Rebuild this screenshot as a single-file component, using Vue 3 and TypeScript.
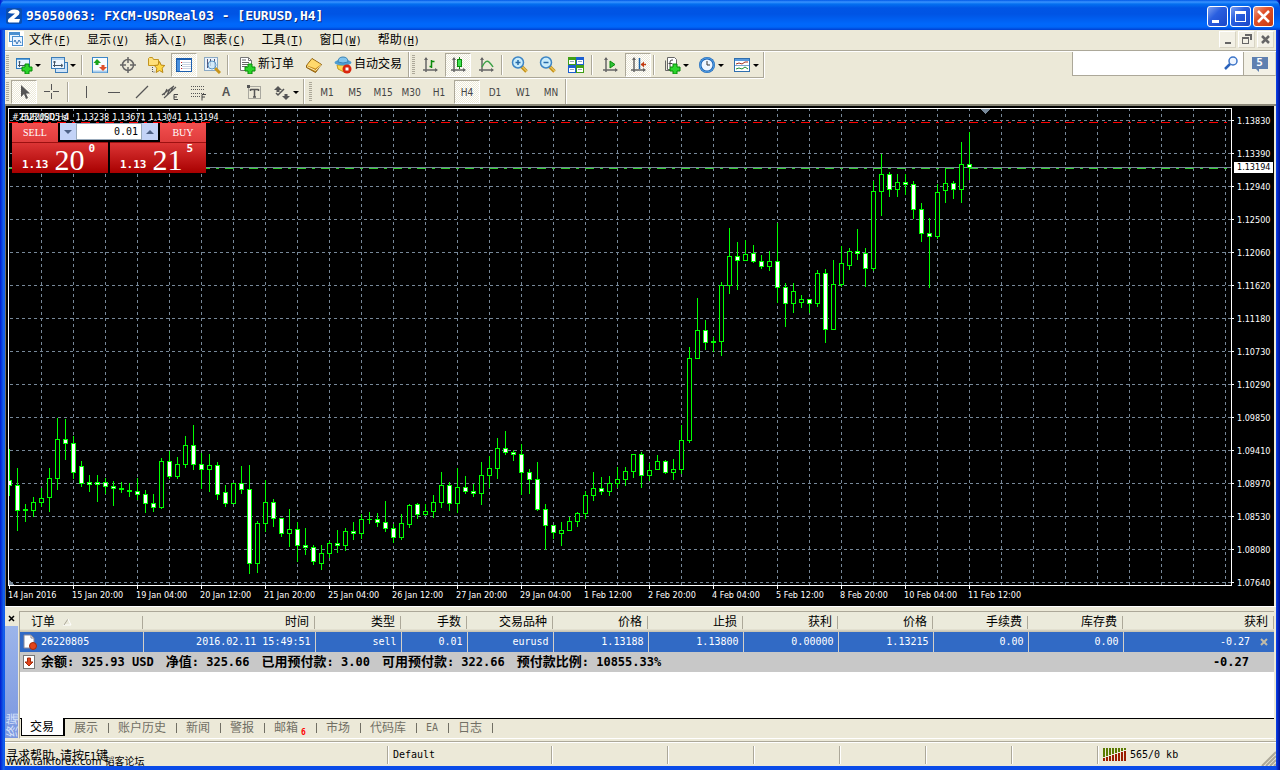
<script setup lang="ts">
import { h, ref } from 'vue'

/* Splits a label into Chinese and Latin runs, each with its own face and size. */
const Mix = (props: { text: string }) =>
  (props.text.match(/[\u4e00-\u9fff]+|[^\u4e00-\u9fff]+/g) ?? []).map((run) =>
    h('span', { class: /[\u4e00-\u9fff]/.test(run) ? 'run-han' : 'run-latin' }, run),
  )
Mix.props = ['text']

const menus = [
  ['文件', 'F'], ['显示', 'V'], ['插入', 'I'], ['图表', 'C'],
  ['工具', 'T'], ['窗口', 'W'], ['帮助', 'H'],
]

const axes = '<path d="M5 2v14M2 14h14" stroke="#666" stroke-width="1.5" fill="none"/><path d="M3 4l2-3 2 3zM14 12l3 2-3 2z" fill="#666"/>'
const plus = '<path d="M10 8h4v3h3v4h-3v3h-4v-3H7v-4h3z" fill="#2bd52b" stroke="#078a07"/>'
const lens = '<path d="M10.500 10.500l5 5" stroke="#c8951c" stroke-width="3.500"/><path d="M11 10.500l5 5" stroke="#ffe184" stroke-width="1"/><circle cx="7" cy="6.500" r="5.500" fill="#c9ecfb" stroke="#3d85c4" stroke-width="1.500"/>'
const sheet = '<path d="M2.500 1.500h8l3 3v10h-11z" fill="#fff" stroke="#777"/><path d="M10.500 1.500v3h3" fill="none" stroke="#777"/>'

const icons: Record<string, string> = {
  newChart: '<rect x="1.500" y="2.500" width="13" height="10" fill="#e8f4ff" stroke="#2f7bbd"/><path d="M2 3.500h12" stroke="#5fa5dd"/><path d="M4.500 5v6M3 9.500h7M3.500 6h2" stroke="#456" fill="none"/>' + plus,
  profiles: '<rect x="5.500" y="6.500" width="12" height="10" fill="#cfe4f8" stroke="#3b7cb8"/><rect x="1.500" y="1.500" width="13" height="11" fill="#eef7ff" stroke="#3b7cb8"/><path d="M2 3h12" stroke="#79b2e2"/><path d="M4.500 5v6M3 9.500h9M11 8l2 1.500-2 1.500M3 6h3" stroke="#456" fill="none"/>',
  market: '<rect x="1.500" y="1.500" width="15" height="15" fill="#fafdff" stroke="#3c87c7"/><path d="M2 15.500h14" stroke="#a9cdec" stroke-width="2"/><path d="M6 3l4 4H7.500v2h-3V7H2.500z" fill="#1ca41c"/><path d="M12 15l-4-4h2.500V9h3v2H16z" fill="#e0512a"/>',
  target: '<circle cx="9" cy="9" r="5.500" fill="none" stroke="#666" stroke-width="1.500"/><path d="M9 1v6M9 11v6M1 9h6M11 9h6" stroke="#666" stroke-width="1.500"/>',
  favourites: '<path d="M1.500 2.500v7h10v-6h-5l-1-2h-3z" fill="#ffe07a" stroke="#c29520"/><path d="M5.500 11v5h3" stroke="#555" stroke-dasharray="1 1" fill="none"/><path d="M12.500 5.500l1.600 3.600 3.700.4-2.700 2.700.8 4.300-3.400-2-3.400 2 .8-4.300-2.700-2.700 3.700-.4z" fill="#ffd845" stroke="#b98712"/>',
  terminal: '<rect x="1.500" y="2.500" width="15" height="13" fill="#fff" stroke="#1d5fae"/><path d="M2 3h3v12H2z" fill="#4a90dd"/><path d="M2 3.500h14" stroke="#1d5fae"/><path d="M7 6.500h9M7 8.500h9M7 10.500h9M7 12.500h9" stroke="#c7d4e2"/><path d="M6 6.500h1M6 12.500h1" stroke="#d22"/><path d="M6 9.500h1" stroke="#111"/>',
  tester: '<rect x="1.500" y="1.500" width="13" height="13" fill="#eaf3fb" stroke="#8aa9c5"/><path d="M4.500 3v9M7.500 3v7M11.500 3v9" stroke="#557" fill="none"/><path d="M12 12l5 5" stroke="#c8951c" stroke-width="3"/><circle cx="9" cy="9" r="4" fill="#cde7f9" fill-opacity=".8" stroke="#5b95c5"/>',
  order: sheet + '<path d="M4 6.500h7M4 8.500h7M4 10.500h5" stroke="#666"/><path d="M4 4h4" stroke="#666"/>' + plus,
  gold: '<path d="M1.500 9.500L7 2.500l9.500 6-6 8-9-5z" fill="#c78a1c" stroke="#8b5d0b"/><path d="M2 9.500L7 3l9 5.500-5.500 4z" fill="#ffd96c"/><path d="M2 10.500l8.500 4 5.500-5" fill="none" stroke="#fff0b8"/>',
  expert: '<path d="M3 9h12l-1 4-4 3-6-3z" fill="#ffd84f" stroke="#c29a20"/><ellipse cx="9" cy="6.500" rx="8.500" ry="3" fill="#4f9ed2"/><path d="M4 6q0-5 5-5t5 5q-5 2-10 0z" fill="#82c4ec" stroke="#3b83b5"/><circle cx="13" cy="13" r="4.500" fill="#d9260f"/><rect x="11.500" y="11.500" width="3" height="3" fill="#fff"/>',
  bars: axes + '<path d="M10.500 4v8M8.500 10.500h2M10.500 5.500h3" stroke="#0b8a0b" stroke-width="1.500" fill="none"/>',
  candles: axes + '<path d="M10.500 1v12" stroke="#0b8a0b"/><rect x="8.500" y="3.500" width="4" height="7" fill="#3fe04f" stroke="#0b8a0b"/>',
  line: axes + '<path d="M5 11q4-8 7-5t4 5" stroke="#3aa046" stroke-width="1.500" fill="none"/>',
  zoomIn: lens + '<path d="M4.500 6.500h5M7 4v5" stroke="#276ba9" stroke-width="1.500"/>',
  zoomOut: lens + '<path d="M4.500 6.500h5" stroke="#276ba9" stroke-width="1.500"/>',
  tile: '<path d="M1 1h8v8H1zM9 9h8v8H9z" fill="#3f9f16"/><path d="M9 1h8v8H9zM1 9h8v8H1z" fill="#1c5fd0"/><path d="M2 4h6v4H2zM10 4h6v4h-6zM2 12h6v4H2zM10 12h6v4h-6z" fill="#fff"/><path d="M3 5.500h4M11 5.500h4M3 13.500h4M11 13.500h4" stroke="#9ab"/>',
  scroll: axes + '<path d="M9 5l5 3.500-5 3.500z" fill="#2dc437" stroke="#0b8a0b"/>',
  shift: axes + '<path d="M10.500 2v11" stroke="#1b62a5" stroke-width="1.500"/><path d="M12 8.500h5" stroke="#c33b10" stroke-width="1.500"/><path d="M12 8.500l3-3v6z" fill="#c33b10"/>',
  indicators: '<path d="M4.500 1.500h7l2 2v10h-9z" fill="#fff" stroke="#666"/><path d="M2.500 4.500v10h5" fill="none" stroke="#666"/><path d="M10 4H9q-2 0-2 2v5M5.500 7.500h4" stroke="#444" fill="none"/>' + plus,
  clock: '<circle cx="9" cy="9" r="8" fill="#1c62b4"/><circle cx="9" cy="9" r="7" fill="none" stroke="#58a9ec"/><circle cx="9" cy="9" r="5.500" fill="#eef6ff"/><path d="M9 5v4h3" stroke="#333" fill="none"/>',
  template: '<rect x="1.500" y="2.500" width="15" height="13" fill="#fff" stroke="#2f6fae"/><path d="M2 4h14" stroke="#5a9bdd" stroke-width="2"/><path d="M2 9.500h14" stroke="#7aa6cf"/><path d="M3 8l3-1 3 1 3-2h3" stroke="#a03020" fill="none"/><path d="M3 13l3-1 3 1 3-2 3 2" stroke="#1a8d30" fill="none"/>',
  cursor: '<path d="M6 2v12l3-3 2 5 2-1-2-4.500h4z" fill="#555"/>',
  cross: '<path d="M8.500 1v6M8.500 10v6M1 8.500h6M10 8.500h6" stroke="#555"/>',
  vline: '<path d="M9.500 3v12" stroke="#555"/>',
  hline: '<path d="M3 9.500h12" stroke="#555"/>',
  trend: '<path d="M3 15L15 3" stroke="#555" stroke-width="1.300"/>',
  channel: '<path d="M1 12L13 3M3 15L15 4M3 12l3-6M6 12l3-6M9 10l3-6" stroke="#555" stroke-width="1.200"/><path d="M17 11.500h-4v5h4M13 14h3" stroke="#444" fill="none"/>',
  fibo: '<path d="M2 3.500h14M2 6.500h14M2 10.500h14M2 13.500h9" stroke="#555" stroke-dasharray="1 1"/><path d="M17 11.500h-4v6M13 14h3" stroke="#444" fill="none"/>',
  label: '<rect x="3.500" y="3.500" width="12" height="12" fill="none" stroke="#666" stroke-dasharray="1 1"/><path d="M2 2h3v3H2z" fill="#555"/><path d="M5.500 6.500h8M9.500 6v8M5.500 6v2M13.500 6v2M8 14h3" stroke="#555" stroke-width="1.500"/>',
  arrows: '<path d="M5 3l4 4H6.500v2h-3V7H1zM13 17l-4-4h2.500v-2h3v2H17z" fill="#555"/><path d="M3 10l2 2 6-6" stroke="#555" stroke-width="1.500" fill="none"/>',
}

interface Tool {
  kind: 'button' | 'sep'
  icon?: string
  title?: string
  text?: string
  pressed?: boolean
  drop?: boolean
}
const b = (icon: string, title: string, extra: Partial<Tool> = {}): Tool => ({ kind: 'button', icon, title, ...extra })
const sep: Tool = { kind: 'sep' }

const mainTools: Tool[] = [
  b('newChart', '新图表', { drop: true }), b('profiles', '配置文件', { drop: true }), sep,
  b('market', '市场报价'), b('target', '数据窗口'), b('favourites', '导航'),
  b('terminal', '终端', { pressed: true }), b('tester', '策略测试'), sep,
  b('order', '新订单', { text: '新订单' }), b('gold', 'MetaEditor'), b('expert', '自动交易', { text: '自动交易' }),
]
const chartTools: Tool[] = [
  b('bars', '柱状图'), b('candles', '阴阳烛', { pressed: true }), b('line', '折线图'), sep,
  b('zoomIn', '放大'), b('zoomOut', '缩小'), b('tile', '平铺窗口'), sep,
  b('scroll', '自动滚动'), b('shift', '图表平移', { pressed: true }), sep,
  b('indicators', '技术指标', { drop: true }), b('clock', '时间周期', { drop: true }), b('template', '模板', { drop: true }),
]
const lineTools: Tool[] = [
  b('cursor', '光标', { pressed: true }), b('cross', '十字准线'), sep,
  b('vline', '垂直线'), b('hline', '水平线'), b('trend', '趋势线'), b('channel', '等距通道'),
  b('fibo', '斐波纳契'), b('', '文字'), b('label', '文本标签'), b('arrows', '箭头', { drop: true }),
]
const toolbarTop = [mainTools, chartTools]
const periods = ['M1', 'M5', 'M15', 'M30', 'H1', 'H4', 'D1', 'W1', 'MN']
const period = ref('H4')
const lots = ref('0.01')
const query = ref('')

const priceLabels = [
  '1.13830', '1.13390', '1.12940', '1.12500', '1.12060', '1.11620', '1.11180', '1.10730',
  '1.10290', '1.09850', '1.09410', '1.08970', '1.08530', '1.08080', '1.07640',
]
const timeLabels = [
  '14 Jan 2016', '15 Jan 20:00', '19 Jan 04:00', '20 Jan 12:00', '21 Jan 20:00', '25 Jan 04:00',
  '26 Jan 12:00', '27 Jan 20:00', '29 Jan 04:00', '1 Feb 12:00', '2 Feb 20:00', '4 Feb 04:00',
  '5 Feb 12:00', '8 Feb 20:00', '10 Feb 04:00', '11 Feb 12:00',
]

/* wick top, body top, body bottom, wick bottom, 1 when the candle closed lower */
const candles: number[][] = [
  [341,372,378,388,1],[360,377,403,423,1],[396,401,403,414,0],[389,394,403,409,0],[380,390,395,399,0],
  [360,370,390,404,0],[310,331,371,382,0],[311,331,336,352,1],[328,335,365,371,1],[353,358,376,379,1],
  [367,374,377,384,1],[367,374,377,394,1],[370,374,379,386,1],[373,378,381,398,1],[374,380,382,385,0],
  [375,382,384,389,0],[370,383,387,392,1],[382,386,396,405,1],[386,395,400,404,1],[350,353,400,401,0],
  [343,353,369,371,1],[349,356,369,371,0],[328,337,357,360,0],[317,337,357,362,1],[345,356,362,381,1],
  [346,357,362,384,0],[354,357,387,392,1],[377,384,396,399,1],[375,375,396,396,0],[358,375,382,386,1],
  [357,381,456,466,1],[413,415,456,465,0],[372,394,416,424,0],[391,394,411,419,1],[410,410,426,429,1],
  [401,421,426,439,0],[414,421,438,454,1],[420,437,440,447,1],[437,439,454,457,1],[437,445,456,462,0],
  [433,435,446,450,0],[422,435,438,445,1],[420,423,438,443,0],[414,423,426,432,1],[406,411,426,431,0],
  [404,411,412,416,0],[405,411,415,419,1],[393,414,421,424,1],[416,420,430,435,1],[406,415,430,432,0],
  [396,397,417,420,0],[395,396,407,411,1],[396,403,407,408,0],[387,394,404,410,0],[364,377,395,400,0],
  [374,377,396,403,1],[360,379,396,405,0],[368,379,384,386,1],[376,383,386,389,1],[354,367,386,397,0],
  [348,360,368,380,0],[330,340,361,371,0],[323,340,345,347,1],[342,344,347,353,1],[336,346,365,387,1],
  [361,364,372,386,1],[354,371,402,403,1],[396,401,418,442,1],[417,417,425,431,1],[414,422,426,438,0],
  [409,413,423,423,0],[404,405,414,419,0],[383,387,406,411,0],[364,380,388,393,0],[369,380,384,387,1],
  [368,375,384,388,0],[359,371,376,380,0],[359,363,372,378,0],[346,346,364,370,0],[344,346,368,380,1],
  [355,362,368,373,0],[347,353,362,362,0],[352,353,365,366,1],[351,361,365,372,0],[317,332,362,366,0],
  [239,250,333,335,0],[190,222,251,251,0],[212,222,235,242,1],[229,233,235,244,0],[174,177,234,248,0],
  [120,148,178,186,0],[134,148,153,182,1],[132,146,153,153,0],[137,145,154,155,1],[147,153,159,161,1],
  [143,153,159,163,0],[115,153,180,195,1],[175,179,196,219,1],[175,183,196,205,0],[187,191,195,200,0],
  [191,191,196,205,1],[162,165,196,199,0],[161,165,222,235,1],[152,176,222,222,0],[138,155,177,179,0],
  [140,143,158,162,0],[121,143,146,152,1],[140,145,161,179,1],[73,83,161,163,0],[46,66,84,108,0],
  [64,66,82,89,1],[66,74,82,89,0],[66,74,77,87,1],[73,76,102,111,1],[95,101,126,134,1],
  [110,125,129,180,1],[76,84,129,131,0],[60,75,83,95,0],[73,75,82,91,1],[34,56,82,95,0],[24,56,60,72,1],
]

const columns = [
  { name: '时间', cell: '2016.02.11 15:49:51' }, { name: '类型', cell: 'sell' }, { name: '手数', cell: '0.01' },
  { name: '交易品种', cell: 'eurusd' }, { name: '价格', cell: '1.13188' }, { name: '止损', cell: '1.13800' },
  { name: '获利', cell: '0.00000' }, { name: '价格', cell: '1.13215' }, { name: '手续费', cell: '0.00' },
  { name: '库存费', cell: '0.00' },
]
const summary = ['余额: 325.93 USD', '净值: 325.66', '已用预付款: 3.00', '可用预付款: 322.66', '预付款比例: 10855.33%']
const tabs = ['展示', '账户历史', '新闻', '警报', '邮箱', '市场', '代码库', 'EA', '日志']
</script>

<template>
  <div class="window">
    <header class="title-bar">
      <svg class="logo" width="16" height="16" viewBox="0 0 16 16" aria-hidden="true">
        <rect width="16" height="16" rx="2" fill="#0a4eb0" />
        <path d="M2 5Q4 1 9 1.500q6 .5 4 5L8 11h6l-1 3.500H3q-2-1-.5-3.500L9 5.500H5.500z" fill="#fff" />
      </svg>
      <h1>95050063: FXCM-USDReal03 - [EURUSD,H4]</h1>
      <div class="caption">
        <button class="cap" aria-label="最小化"><svg width="19" height="19"><path d="M4 13h7v3H4z" fill="#fff" /></svg></button>
        <button class="cap" aria-label="最大化"><svg width="19" height="19"><path d="M4 4h11v11H4zM5 7v7h9V7z" fill="#fff" fill-rule="evenodd" /></svg></button>
        <button class="cap close" aria-label="关闭"><svg width="19" height="19"><path d="M4 4l11 11M15 4L4 15" stroke="#fff" stroke-width="2.500" /></svg></button>
      </div>
    </header>

    <div class="client">
      <nav class="menu-bar">
        <svg width="16" height="16" viewBox="0 0 16 16" aria-hidden="true">
          <rect width="16" height="16" fill="#fff" />
          <rect x="1.500" y="1.500" width="10" height="9" fill="#eaf4ff" stroke="#4a8fd0" />
          <path d="M2 3h9" stroke="#4a8fd0" stroke-width="2" />
          <rect x="4.500" y="5.500" width="10" height="9" fill="#eaf4ff" stroke="#4a8fd0" />
          <path d="M6 11l1-2 2 4 2-4 2 3" fill="none" stroke="#3976b5" />
        </svg>
        <button v-for="[name, key] in menus" :key="key" class="menu">
          <span class="run-han">{{ name }}</span><span class="run-latin">(<u>{{ key }}</u>)</span>
        </button>
        <div class="mdi">
          <button aria-label="最小化图表"><svg width="14" height="14"><path d="M4 10h6v2H4z" fill="#666" /></svg></button>
          <button aria-label="还原图表"><svg width="14" height="14"><path d="M5 2h7v6h-2V4H5zM2 5h7v7H2zM3 7v4h5V7z" fill="#666" fill-rule="evenodd" /></svg></button>
          <button aria-label="关闭图表"><svg width="14" height="14"><path d="M3 4l7 7M10 4l-7 7" stroke="#666" stroke-width="2.500" /></svg></button>
        </div>
      </nav>

      <div class="tools-row">
        <div v-for="(group, g) in toolbarTop" :key="g" class="toolbar">
          <i class="grip"></i>
          <template v-for="(t, n) in group" :key="n">
            <i v-if="t.kind === 'sep'" class="sep"></i>
            <button v-else :class="['tool', { pressed: t.pressed, drop: t.drop, wide: t.text }]" :title="t.title" :aria-label="t.title">
              <svg width="18" height="18" viewBox="0 0 18 18" v-html="icons[t.icon!]"></svg>
              <span v-if="t.text" class="run-han caption-text">{{ t.text }}</span>
              <i v-if="t.drop" class="caret"></i>
            </button>
          </template>
        </div>
        <div class="search">
          <input v-model="query" type="text" aria-label="搜索" />
          <svg width="15" height="15" viewBox="0 0 15 15" aria-hidden="true">
            <circle cx="9" cy="5" r="4" fill="#eef5ff" stroke="#3c74c8" stroke-width="1.500" />
            <path d="M6 8l-5 5" stroke="#2a62bb" stroke-width="2.500" />
          </svg>
        </div>
        <button class="chat" aria-label="消息 5">
          <svg width="18" height="18" viewBox="0 0 18 18"><path d="M1 2h16v12H8v3l-3-3H1z" fill="#5f80b0" /></svg>
          <b>5</b>
        </button>
      </div>

      <div class="tools-row second">
        <div class="toolbar">
          <i class="grip"></i>
          <template v-for="(t, n) in lineTools" :key="n">
            <i v-if="t.kind === 'sep'" class="sep"></i>
            <button v-else :class="['tool', { pressed: t.pressed, drop: t.drop }]" :title="t.title" :aria-label="t.title">
              <svg v-if="t.icon" width="18" height="18" viewBox="0 0 18 18" v-html="icons[t.icon]"></svg>
              <span v-else class="letter">A</span>
              <i v-if="t.drop" class="caret"></i>
            </button>
          </template>
        </div>
        <div class="toolbar">
          <i class="grip"></i>
          <button v-for="p in periods" :key="p" :class="['tool', 'period', { pressed: p === period }]" @click="period = p">{{ p }}</button>
        </div>
      </div>

      <main class="chart">
        <div class="plot-row">
          <div class="plot">
            <svg width="100%" height="476" shape-rendering="crispEdges" role="img" aria-label="EURUSD H4">
              <defs>
                <pattern id="dots-h" x="1" width="6" height="1" patternUnits="userSpaceOnUse"><rect width="3" height="1" fill="#778899" /></pattern>
                <pattern id="dots-v" y="0" width="1" height="6" patternUnits="userSpaceOnUse"><rect width="1" height="3" fill="#778899" /></pattern>
                <pattern id="stop" width="24" height="1" patternUnits="userSpaceOnUse"><rect width="9" height="1" fill="#ff0000" /><rect x="15" width="3" height="1" fill="#ff0000" /></pattern>
                <pattern id="open" width="24" height="1" patternUnits="userSpaceOnUse"><rect width="9" height="1" fill="#32cd32" /><rect x="15" width="3" height="1" fill="#32cd32" /></pattern>
              </defs>
              <g transform="translate(0 -1)">
                <rect v-for="k in 60" :key="'v' + k" :x="32 * k" y="0" width="1" height="477" fill="url(#dots-v)" />
                <rect v-for="k in 15" :key="'h' + k" x="0" :y="33 * k - 21" width="100%" height="1" fill="url(#dots-h)" />
                <rect x="0" y="14" width="100%" height="1" fill="url(#stop)" />
                <rect x="0" y="59" width="100%" height="1" fill="#778899" />
                <rect x="0" y="60" width="100%" height="1" fill="url(#open)" />
                <g v-for="(c, n) in candles" :key="n">
                  <rect :x="8 * n" :y="c[0]" width="1" :height="c[3] - c[0]" fill="#00ff00" />
                  <rect :x="8 * n - 2" :y="c[1]" width="5" :height="c[2] - c[1]" fill="#00ff00" />
                  <rect :x="8 * n - 1" :y="c[1] + 1" width="3" :height="Math.max(0, c[2] - c[1] - 2)" :fill="c[4] ? '#ffffff' : '#000000'" />
                </g>
                <path d="M972 1h9l-4 5h-1z" fill="#778899" />
                <path d="M0 472l5 5H0z" fill="#778899" />
              </g>
            </svg>
            <p class="quote"><span>EURUSD,H4</span><span>1.13238</span><span>1.13671</span><span>1.13041</span><span>1.13194</span></p>
            <p class="stop-label">#26220805 sl</p>
            <div class="one-click">
              <button class="side sell-tab">SELL</button>
              <div class="lots">
                <button aria-label="减少"><i class="down"></i></button>
                <input v-model="lots" type="text" aria-label="手数" />
                <button aria-label="增加"><i class="up"></i></button>
              </div>
              <button class="side buy-tab">BUY</button>
              <button class="deal"><b>1.13</b><span>20</span><sup>0</sup></button>
              <button class="deal"><b>1.13</b><span>21</span><sup>5</sup></button>
            </div>
          </div>
          <div class="prices">
            <ul><li v-for="p in priceLabels" :key="p">{{ p }}</li></ul>
            <strong>1.13194</strong>
          </div>
        </div>
        <ul class="times"><li v-for="t in timeLabels" :key="t">{{ t }}</li></ul>
      </main>

      <section class="terminal">
        <aside class="strip">
          <button aria-label="关闭终端"><svg width="8" height="8"><path d="M1 1l5 5M6 1L1 6" stroke="#000" stroke-width="1.500" /></svg></button>
          <div class="spine"><span>终端</span></div>
        </aside>
        <div class="panel">
          <table>
            <colgroup>
              <col class="w-order" /><col class="w-time" /><col class="w-type" /><col class="w-lots" /><col class="w-type" />
              <col v-for="k in 6" :key="k" class="w-num" /><col />
            </colgroup>
            <thead>
              <tr>
                <th class="first">
                  <span class="run-han">订单</span>
                  <svg width="9" height="8"><path d="M0 7h8" stroke="#fff" /><path d="M1 7l4-6" stroke="#aca899" /><path d="M5 1l3 6" stroke="#fff" /></svg>
                </th>
                <th v-for="(c, n) in columns" :key="n"><span class="run-han">{{ c.name }}</span></th>
                <th><span class="run-han">获利</span></th>
              </tr>
            </thead>
            <tbody>
              <tr class="position">
                <td class="first">
                  <svg width="15" height="16" viewBox="0 0 15 16"><path d="M1 1h7l3 3v10H1z" fill="#fff" stroke="#889" /><path d="M8 1v3h3" fill="none" stroke="#889" /><circle cx="10" cy="12" r="3.500" fill="#e2451c" stroke="#a32a0a" /></svg>
                  <span>26220805</span>
                </td>
                <td v-for="(c, n) in columns" :key="n">{{ c.cell }}</td>
                <td class="profit">-0.27
                  <button aria-label="平仓"><svg width="8" height="8"><path d="M1 1l6 6M7 1L1 7" stroke="#c0bba8" stroke-width="2" /></svg></button>
                </td>
              </tr>
              <tr class="balance">
                <td colspan="11">
                  <div class="balance-line">
                    <svg width="12" height="14" viewBox="0 0 12 14"><rect x=".5" y=".5" width="11" height="13" fill="#fff" stroke="#777" /><path d="M4.500 3h3v4H10l-4 4-4-4h2.500z" fill="#e2451c" stroke="#a32a0a" /></svg>
                    <span v-for="s in summary" :key="s"><Mix :text="s" /></span>
                  </div>
                </td>
                <td class="profit">-0.27</td>
              </tr>
            </tbody>
          </table>
          <div class="blank"></div>
          <nav class="tabs">
            <button class="tab active"><span class="run-han">交易</span></button>
            <button v-for="t in tabs" :key="t" class="tab"><Mix :text="t" /><sub v-if="t === '邮箱'">6</sub></button>
          </nav>
        </div>
      </section>

      <footer class="status">
        <div class="pane help"><Mix text="寻求帮助,请按F1键" /><span class="site">www.talkforex.com <span>韬客论坛</span></span></div>
        <div class="pane profile">Default</div>
        <div class="pane p-mid"></div>
        <div v-for="k in 5" :key="k" class="pane p-small"></div>
        <div class="pane net">
          <svg width="24" height="13" shape-rendering="crispEdges">
            <template v-for="k in 8" :key="k">
              <rect :x="3 * k - 3" y="0" width="2" :height="10 - k" fill="#5a7a00" />
              <rect :x="3 * k - 3" :y="11 - k" width="2" :height="2 + k" fill="#9b1c00" />
            </template>
          </svg>
          <span>565/0 kb</span>
        </div>
        <svg class="resize" width="15" height="15"><path d="M1 15L15 1M5 15L15 5M9 15l6-6M13 15l2-2" stroke="#aca899" stroke-width="2" /></svg>
      </footer>
    </div>
  </div>
</template>

<style>
html, body { margin: 0; background: #0831d9; }
.run-han { font-family: "Noto Sans CJK SC", sans-serif; font-size: 12px; }
.run-latin { font-family: "DejaVu Sans Mono", monospace; font-size: 10px; }
</style>

<style scoped>
* { box-sizing: border-box; }
button, input { font: inherit; color: inherit; border: 0; padding: 0; margin: 0; background: none; border-radius: 0; outline: none; }
ul, p, h1 { margin: 0; padding: 0; list-style: none; }
svg { display: block; flex: none; }
i { font-style: normal; }

.window {
  min-height: 100vh; display: flex; flex-direction: column;
  background: linear-gradient(90deg, #0019cf, #166aee 4px, #0a4be8 5px, #0a4be8 calc(100% - 4px), #0831d9 calc(100% - 3px), #00138c);
  padding: 0 4px 4px 5px;
  font-family: "DejaVu Sans Mono", monospace; font-size: 10px; color: #000;
}
.title-bar {
  height: 30px; margin: 0 -4px 0 -5px; padding: 2px 6px 0 6px; display: flex; align-items: center;
  background: linear-gradient(#0058e6 0, #3a93ff 2px, #0470f0 4px, #0055e5 8px, #0054e4 14px, #0068fb 24px, #0066f8 27px, #003fd0 30px);
  border-radius: 7px 7px 0 0;
}
.title-bar h1 { flex: 1; margin-left: 4px; font-size: 13px; line-height: 20px; font-weight: bold; color: #fff; text-shadow: 1px 1px 0 #0a2a80; white-space: nowrap; }
.caption { display: flex; gap: 2px; }
.cap { width: 21px; height: 21px; border: 1px solid #fff; border-radius: 3px; background: linear-gradient(135deg, #7da0f0, #2a5fe0 40%, #1a46c8); }
.cap.close { background: linear-gradient(135deg, #f0a088, #e0502a 40%, #c63a10); }

.client { flex: 1; display: flex; flex-direction: column; background: #ece9d8; }
.menu-bar { height: 22px; display: flex; align-items: center; padding: 0 2px 3px 3px; border-bottom: 1px solid #fff; box-shadow: inset 0 -1px #aca899; }
.menu { height: 18px; padding: 0 8px; white-space: nowrap; line-height: 18px; display: flex; align-items: baseline; }
.menu:first-of-type { padding-left: 5px; }
.mdi { margin-left: auto; display: flex; gap: 2px; }
.mdi button { width: 17px; height: 17px; display: flex; align-items: center; justify-content: center; background: #f3f1e6; border: 1px solid #fff; border-right-color: #d8d4c4; border-bottom-color: #d8d4c4; }

.tools-row { display: flex; height: 27px; }
.toolbar { display: flex; align-items: center; height: 26px; border-right: 1px solid #aca899; border-bottom: 1px solid #aca899; padding: 1px 0 0 1px; box-shadow: 0 1px #fff, 1px 0 #fff; }
.second { height: 27px; border-bottom: 2px solid #8a8778; }
.second .toolbar { height: 25px; border-bottom: 0; box-shadow: 1px 0 #fff; margin-right: 2px; }
.grip { width: 3px; height: 20px; margin-right: 1px; background: repeating-linear-gradient(#aca899 0 1px, transparent 1px 2px); }
.toolbar + .toolbar { padding-left: 3px; }
.sep { width: 6px; height: 20px; padding-left: 2px; background: linear-gradient(90deg, transparent 1px, #aca899 1px 2px, #fff 2px 3px, transparent 3px); }
.tool { width: 26px; height: 24px; margin: 0 1px; display: flex; align-items: center; justify-content: center; flex: none; }
.tool.pressed { border: 1px solid #aca899; border-right-color: #fff; border-bottom-color: #fff; background: repeating-conic-gradient(#fff 0 25%, #ece9d8 0 50%) 0 0 / 2px 2px; }
.tool.drop { width: 33px; gap: 2px; }
.tool.wide { width: auto; padding: 0 5px; gap: 2px; }
.caption-text { line-height: 20px; padding-bottom: 4px; }
.caret { border: 3px solid transparent; border-top-color: #000; border-bottom-width: 0; }
.letter { font: bold 12px "Liberation Sans", sans-serif; color: #555; }
.period { font: 10px "DejaVu Sans Condensed", "DejaVu Sans", sans-serif; color: #444; }

.search { margin-left: auto; width: 172px; height: 24px; display: flex; align-items: center; background: #fff; border: 1px solid #aca899; border-top: 0; padding-right: 4px; }
.search input { flex: 1; min-width: 0; height: 20px; }
.chat { width: 32px; height: 24px; display: grid; place-items: center; background: #f3f1e6; border-right: 1px solid #d8d4c4; border-bottom: 1px solid #aca899; }
.chat svg, .chat b { grid-area: 1 / 1; }
.chat b { color: #fff; font-size: 11px; line-height: 14px; padding-bottom: 2px; }

.chart {
  flex: 1; margin: 0 2px 0 0; padding: 2px 0 0 3px; background: #000; border-left: 1px solid #716f64;
  font: 9px "DejaVu Sans Condensed", "DejaVu Sans", sans-serif; color: #fff; min-height: 500px;
}
.plot-row { display: flex; margin-left: -1px; }
.plot { flex: 1; min-width: 0; height: 478px; border: 1px solid #fff; position: relative; overflow: hidden; }
.quote { position: absolute; left: 12px; top: 1px; line-height: 14px; display: flex; gap: 3px; white-space: nowrap; }
.quote span:first-child { margin-right: 4px; }
.stop-label { position: absolute; left: 3px; top: 1px; line-height: 14px; white-space: nowrap; }
.prices { width: 42px; height: 478px; position: relative; }
.prices ul { margin-top: -4px; }
.prices li { height: 33px; display: flex; align-items: center; line-height: 12px; }
.prices li::before { content: ""; width: 2px; height: 1px; background: #fff; margin-right: 3px; }
.prices strong { position: absolute; left: 2px; right: 1px; top: 54px; line-height: 11px; padding-left: 3px; background: #fff; color: #000; font-weight: normal; }
.times { display: flex; margin-left: -1px; overflow: hidden; }
.times li { flex: 0 0 64px; white-space: nowrap; line-height: 18px; background: linear-gradient(#fff, #fff) 1px 0 / 1px 3px no-repeat; }
.times li:last-child { flex-basis: 80px; }

.one-click { position: absolute; left: 3px; top: 14px; display: grid; grid-template: 19px 31px / 46px 50px 2px 50px 46px; background: #000; color: #fff; }
.side { background: linear-gradient(#f25050, #e03c3c); font: 10px "Liberation Serif", serif; }
.sell-tab { grid-area: 1 / 1; }
.lots { grid-area: 1 / 2 / 2 / 5; margin: 0 2px 2px; display: flex; background: #fff; color: #000; min-width: 0; }
.lots button { width: 16px; display: grid; place-items: center; background: #c3d3f7; }
.lots input { flex: 1; min-width: 0; text-align: right; padding-right: 3px; border: 1px solid #9ab; font: 10px "DejaVu Sans Mono", monospace; }
.lots i { border: 4px solid transparent; }
.lots .down { border-top-color: #4d6185; border-bottom-width: 0; }
.lots .up { border-bottom-color: #4d6185; border-top-width: 0; }
.buy-tab { grid-area: 1 / 5; }
.deal { display: flex; align-items: flex-end; justify-content: flex-start; padding: 0 0 0 10px; background: linear-gradient(#dc3535, #a80000); border-top: 1px solid #9c1010; }
.deal:nth-of-type(3) { grid-area: 2 / 1 / 3 / 3; }
.deal:nth-of-type(4) { grid-area: 2 / 4 / 3 / 6; }
.deal b { font: bold 11px "DejaVu Sans Mono", monospace; line-height: 16px; }
.deal span { font: 30px "Liberation Serif", serif; line-height: 26px; margin-left: 6px; }
.deal sup { font: bold 11px "DejaVu Sans Mono", monospace; line-height: 12px; align-self: flex-start; margin-left: 4px; }

.terminal { height: 136px; display: flex; padding: 5px 2px 0 0; border-top: 1px solid #fff; border-bottom: 1px solid #aca899; }
.strip { width: 14px; display: flex; flex-direction: column; padding-right: 1px; }
.strip button { height: 14px; display: grid; place-items: center; }
.spine { flex: 1; margin-bottom: 3px; background: linear-gradient(#9cb5ea, #7a96df); display: flex; align-items: flex-end; justify-content: center; }
.spine span { writing-mode: vertical-rl; text-orientation: sideways; transform: rotate(180deg); font: 12px "Noto Sans CJK SC", sans-serif; line-height: 13px; color: #d5e1fa; padding-top: 1px; }
.panel { flex: 1; min-width: 0; display: flex; flex-direction: column; border-top: 1px solid #aca899; border-left: 1px solid #aca899; border-bottom: 1px solid #fff; margin: -1px 0 2px; }
table { width: 100%; table-layout: fixed; border-collapse: collapse; }
.w-order { width: 123px; } .w-time { width: 172px; } .w-type { width: 86px; } .w-lots { width: 66px; } .w-num { width: 95px; }
th { height: 20px; padding: 0 6px 0 0; text-align: right; font-weight: normal; line-height: 18px; background: linear-gradient(#aca899, #aca899) right 4px / 1px 13px no-repeat; }
thead tr { background: linear-gradient(#ebeadb 17px, #d8d4c4 18px, #c5c1b0); }
th.first { text-align: left; padding-left: 11px; }
th.first svg { display: inline-block; margin-left: 8px; }
td { height: 20px; padding: 0 4px 0 0; text-align: right; line-height: 18px; white-space: nowrap; }
.position { background: #316ac5; color: #fff; }
.position td { border-right: 1px solid #d4d0c8; }
.position td.first { text-align: left; padding-left: 3px; }
td.first svg, td.first span { display: inline-block; vertical-align: middle; }
td.first span { margin-left: -3px; }
.position td.profit { border-right: 0; padding-right: 6px; }
.profit button { margin-left: 4px; display: inline-block; vertical-align: middle; }
.balance { background: #c8c8c8; font-weight: bold; }
.balance-line { display: flex; align-items: center; gap: 12px; padding-left: 3px; }
.balance-line svg { margin-right: -6px; }
.balance .profit, .balance-line :deep(.run-latin) { font-size: 12px; }
.balance-line :deep(.run-han) { font-size: 13px; }
.balance td.profit { padding-right: 25px; }
td.first span { margin-left: 3px; }
.blank { flex: 1; background: #fff; border-bottom: 1px solid #000; }
.tabs { height: 19px; display: flex; color: #716f64; padding-left: 1px; }
.tab { position: relative; padding: 0 11px 3px 9px; line-height: 15px; white-space: nowrap; background: linear-gradient(#716f64, #716f64) right 4px / 1px 10px no-repeat; }
.tab.active { margin-top: -1px; height: 18px; padding: 0 9px 2px 8px; color: #000; background: #fff; border: 1px solid #000; border-top: 0; border-right-width: 2px; }
.tab sub { font-size: 8px; font-weight: bold; color: #f00; margin-left: 3px; line-height: 8px; }

.status { height: 24px; display: flex; align-items: center; border-top: 1px solid #fff; }
.pane { height: 18px; line-height: 18px; border-right: 1px solid #aca899; box-shadow: 1px 0 #fff; white-space: nowrap; flex: none; }
.help { width: 383px; position: relative; padding-left: 1px; }
.site { position: absolute; left: 1px; top: 8px; font: 10px "DejaVu Sans", sans-serif; line-height: 14px; }
.site span { font-family: "Noto Sans CJK SC", sans-serif; }
.profile { width: 164px; padding-left: 5px; }
.p-mid { width: 116px; } .p-small { width: 86px; }
.net { flex: 1; display: flex; align-items: center; gap: 3px; padding-left: 5px; border: 0; box-shadow: none; }
.resize { align-self: flex-end; }
</style>
